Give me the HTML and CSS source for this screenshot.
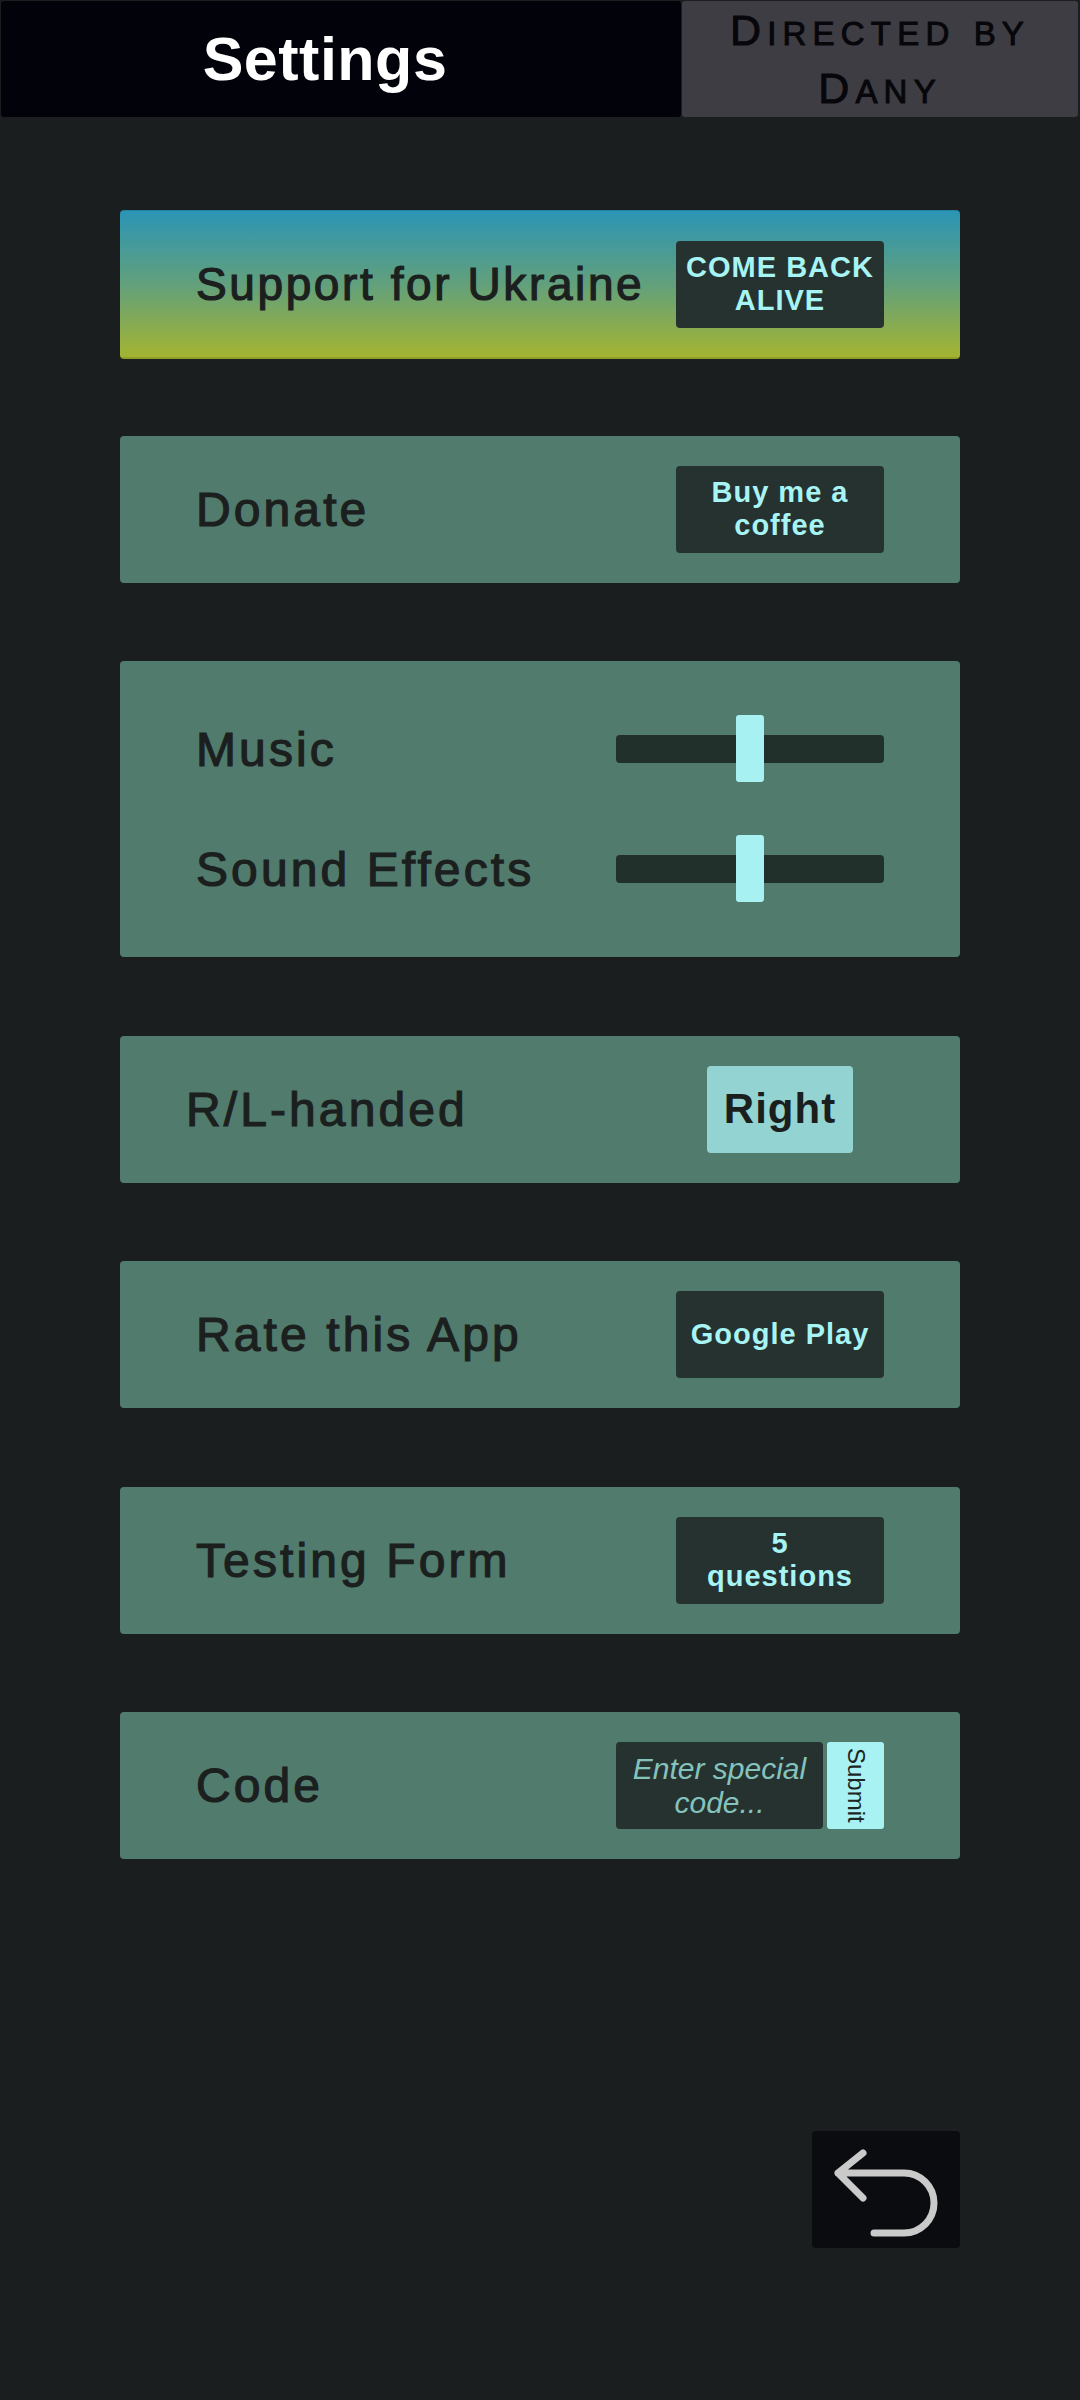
FILE: index.html
```html
<!DOCTYPE html>
<html lang="en">
<head>
<meta charset="utf-8">
<title>Settings</title>
<link rel="stylesheet" href="styles.css">
</head>
<body>
<header class="topbar">
  <div class="title-box"><h1 class="title">Settings</h1></div>
  <div class="credit-box">
    <div class="credit">D<span class="sc">irected</span> <span class="sc">by</span><br>D<span class="sc">any</span></div>
  </div>
</header>
<main class="content">
  <section class="card ukraine">
    <span class="label label-sm">Support for Ukraine</span>
    <button class="btn">COME BACK<br>ALIVE</button>
  </section>
  <section class="card">
    <span class="label">Donate</span>
    <button class="btn">Buy me a<br>coffee</button>
  </section>
  <section class="card audio">
    <div class="audio-row">
      <span class="label">Music</span>
      <div class="slider"><div class="track"></div><div class="handle"></div></div>
    </div>
    <div class="audio-row">
      <span class="label">Sound Effects</span>
      <div class="slider"><div class="track"></div><div class="handle"></div></div>
    </div>
  </section>
  <section class="card hand">
    <span class="label">R/L-handed</span>
    <button class="btn-light">Right</button>
  </section>
  <section class="card">
    <span class="label">Rate this App</span>
    <button class="btn">Google Play</button>
  </section>
  <section class="card">
    <span class="label">Testing Form</span>
    <button class="btn">5<br>questions</button>
  </section>
  <section class="card">
    <span class="label">Code</span>
    <div class="code-group">
      <div class="code-input">Enter special<br>code...</div>
      <button class="submit">Submit</button>
    </div>
  </section>
  <div class="back-row">
    <button class="back" aria-label="Back">
      <svg width="148" height="117" viewBox="0 0 148 117">
        <path d="M51 22 L26 42 L51 67 M26 42 H92 A30 30 0 0 1 92 102 H62" fill="none" stroke="#cacaca" stroke-width="7" stroke-linecap="round" stroke-linejoin="round"/>
      </svg>
    </button>
  </div>
</main>
</body>
</html>
```
FILE: styles.css
```css
html, body {
  margin: 0;
  padding: 0;
}
body {
  background: #1b1e1e;
  width: 1080px;
  height: 2400px;
  font-family: "Liberation Sans", Arial, sans-serif;
  overflow: hidden;
}
.topbar {
  display: flex;
  height: 118px;
  padding: 1px 2px 1px 1px;
  box-sizing: border-box;
  gap: 1px;
}
.title-box {
  width: 680px;
  background: #02020a;
  border-radius: 3px;
  display: flex;
  align-items: center;
  justify-content: center;
  padding-right: 32px;
  box-sizing: border-box;
}
.title {
  margin: 0;
  color: #ffffff;
  font-size: 61px;
  font-weight: bold;
  letter-spacing: 0.5px;
}
.credit-box {
  flex: 1;
  background: #3e3d44;
  border-radius: 3px;
  display: flex;
  align-items: center;
  justify-content: center;
}
.credit {
  color: #07070b;
  font-size: 43px;
  line-height: 55px;
  letter-spacing: 6.2px;
  text-align: center;
  margin-top: 4px;
  -webkit-text-stroke: 1px #07070b;
}
.sc {
  text-transform: uppercase;
  font-size: 33px;
}
.content {
  padding: 92px 0 0 120px;
}
.card {
  width: 840px;
  height: 147px;
  box-sizing: border-box;
  background: #517b6c;
  border-radius: 4px;
  display: flex;
  align-items: center;
  justify-content: space-between;
  padding: 0 76px;
  margin-bottom: 78.5px;
}
.ukraine {
  height: 149px;
  background: linear-gradient(#2b95b5, #62a07c 50%, #a4b432);
  border-top: 1px solid #2482a6;
  border-bottom: 2px solid #8f9e24;
  margin-bottom: 76.5px;
}
.label {
  color: #1b201f;
  font-size: 48px;
  letter-spacing: 3.1px;
  -webkit-text-stroke: 1.2px #1b201f;
}
.label-sm {
  font-size: 46px;
  letter-spacing: 2.6px;
}
.btn {
  width: 208px;
  height: 87px;
  border: none;
  border-radius: 4px;
  background: #26322f;
  color: #a7f4f4;
  font-family: "Liberation Sans", Arial, sans-serif;
  font-weight: bold;
  font-size: 29px;
  line-height: 33px;
  letter-spacing: 1px;
  padding: 0;
  text-align: center;
}
.audio {
  height: 296px;
  flex-direction: column;
  justify-content: center;
  align-items: stretch;
  gap: 52px;
}
.audio-row {
  display: flex;
  align-items: center;
  justify-content: space-between;
  height: 68px;
}
.slider {
  width: 268px;
  height: 68px;
  position: relative;
  display: flex;
  align-items: center;
}
.track {
  width: 100%;
  height: 28px;
  background: #22302c;
  border-radius: 4px;
}
.handle {
  position: absolute;
  left: 120px;
  top: 0;
  width: 28px;
  height: 67px;
  background: #a8f1f3;
  border-radius: 3px;
}
.hand {
  padding: 0 107px 0 66px;
}
.btn-light {
  width: 146px;
  height: 87px;
  border: none;
  border-radius: 4px;
  background: #93d4d3;
  color: #1a1f1e;
  font-family: "Liberation Sans", Arial, sans-serif;
  font-weight: bold;
  font-size: 42px;
  letter-spacing: 1px;
  padding: 0;
}
.code-group {
  display: flex;
  gap: 4px;
  height: 87px;
}
.code-input {
  width: 207px;
  height: 87px;
  background: #26322f;
  border-radius: 4px;
  color: #84c3bd;
  font-style: italic;
  font-size: 30px;
  line-height: 34px;
  text-align: center;
  display: flex;
  align-items: center;
  justify-content: center;
}
.submit {
  width: 57px;
  height: 87px;
  border: none;
  border-radius: 3px;
  background: #a9f2f4;
  color: #1d2624;
  font-family: "Liberation Sans", Arial, sans-serif;
  font-size: 24px;
  writing-mode: vertical-rl;
  padding: 0;
  text-align: center;
}
.back-row {
  width: 840px;
  display: flex;
  justify-content: flex-end;
  margin-top: 272px;
}
.back {
  width: 148px;
  height: 117px;
  background: #0b0c0f;
  border: none;
  border-radius: 4px;
  padding: 0;
  display: block;
}
.back svg {
  display: block;
  filter: blur(0.6px);
}
```
